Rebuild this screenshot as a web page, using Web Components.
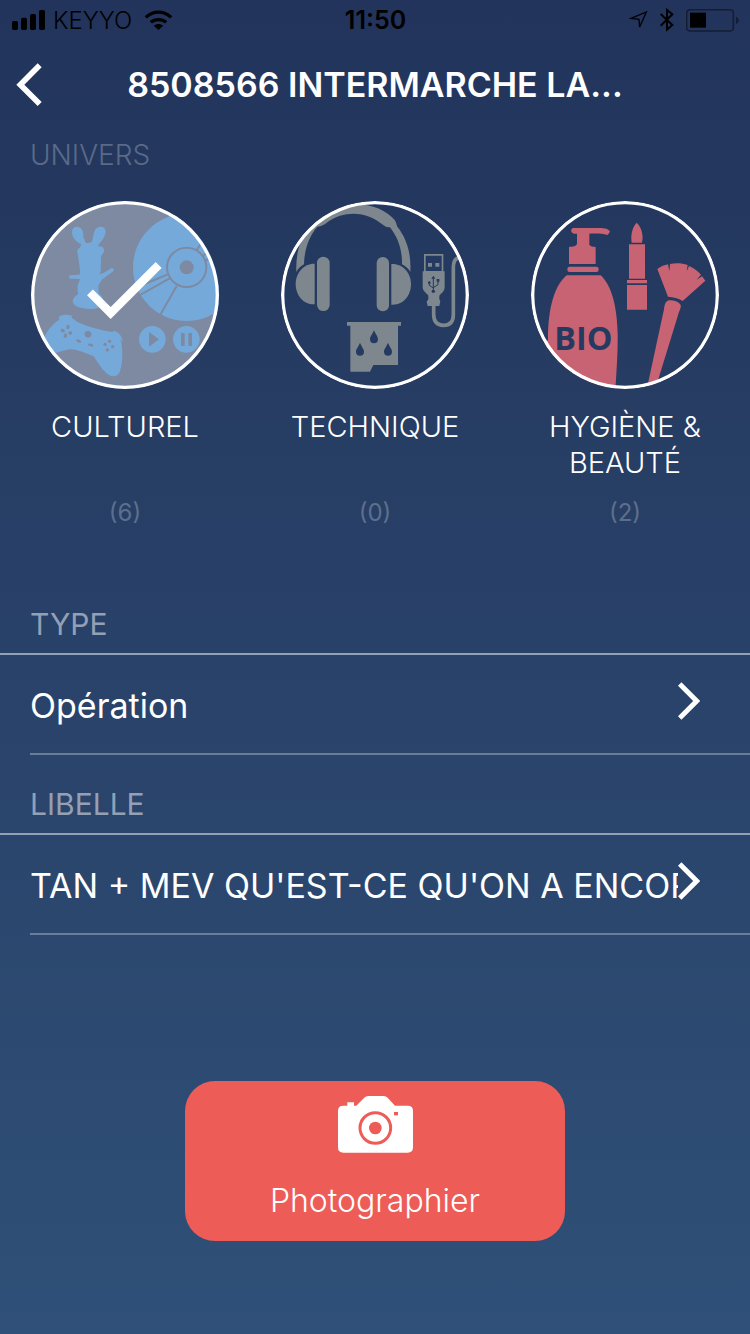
<!DOCTYPE html>
<html lang="fr">
<head>
<meta charset="utf-8">
<meta name="viewport" content="width=device-width, initial-scale=1">
<title>Photographier</title>
<style>
body {
    margin: 0;
    font-family: Inter, "Liberation Sans", sans-serif;
    color: #fff;
}
</style>
</head>
<body>
<photo-screen>
    <status-bar carrier="KEYYO" time="11:50"></status-bar>
    <nav-bar>8508566 INTERMARCHE LA...</nav-bar>
    <universe-picker heading="UNIVERS">
        <universe-tile count="6" selected>
            <svg slot="art" viewBox="33 33 564 564" aria-hidden="true">
                <g fill="#75a9da">
                    <circle cx="500" cy="232" r="161"/>
                    <path d="M184 163C166 155 155 140 156 126C157 113 165 109 174 111C188 113 191 128 190 142L198 160L215 157C219 146 219 134 224 122C229 110 245 107 253 114C262 125 254 145 235 164L236 171C246 166 253 174 252 184C250 193 244 194 243 200L242 245L238 253C252 250 263 242 273 235C279 231 284 238 280 244L245 269C243 277 235 281 235 290L236 310C247 318 253 329 249 341C242 358 208 359 190 355C166 351 156 341 159 329C161 321 168 318 175 312C170 298 173 279 181 268L168 266L150 266C146 263 147 257 151 256L177 254C182 252 180 246 180 240L173 190C171 181 173 175 180 173Z"/>
                    <path d="M70 448C76 430 92 407 117 389L117 380C128 373 144 373 156 377L155 385C162 387 165 391 172 396C205 411 242 421 278 426C283 419 300 430 304 442L302 451C309 472 309 519 300 544C295 559 280 563 267 555C248 543 234 519 221 499C200 491 174 479 153 478C136 479 121 486 109 488C90 484 76 470 70 448Z"/>
                    <circle cx="397" cy="448" r="40"/>
                    <circle cx="499" cy="448" r="40"/>
                </g>
                <path d="M280 424C292 425 305 440 307 455" fill="none" stroke="#75a9da" stroke-width="3"/>
                <g fill="none" stroke="#7d8aa2" stroke-width="6">
                    <circle cx="500" cy="232" r="59"/>
                    <path d="M442 254L352 291M449 265L360 315M470 288L421 374M530 181L552 146M549 198L575 175M558 212L590 192"/>
                </g>
                <g fill="#7d8aa2">
                    <circle cx="500" cy="232" r="21"/>
                    <path d="M387 426L417 448L387 470ZM483 429h11v39h-11ZM505 429h11v39h-11Z"/>
                    <circle cx="204" cy="433" r="10"/>
                    <ellipse cx="144" cy="411" rx="5" ry="7" transform="rotate(20 144 411)"/>
                    <ellipse cx="128" cy="422" rx="7" ry="5" transform="rotate(20 128 422)"/>
                    <ellipse cx="151" cy="429" rx="6" ry="5"/>
                    <ellipse cx="136" cy="437" rx="5" ry="7" transform="rotate(20 136 437)"/>
                    <ellipse cx="176" cy="453" rx="8" ry="4" transform="rotate(25 176 453)"/>
                    <ellipse cx="212" cy="465" rx="8" ry="4" transform="rotate(15 212 465)"/>
                    <circle cx="269" cy="454" r="5"/>
                    <circle cx="255" cy="463" r="5"/>
                    <circle cx="278" cy="470" r="5"/>
                    <circle cx="262" cy="480" r="5"/>
                </g>
            </svg>
            CULTUREL
        </universe-tile>
        <universe-tile count="0">
            <svg slot="art" viewBox="33 33 564 564" aria-hidden="true">
                <g fill="#7d878d">
                    <path d="M79 246C77 195 87 145 125 108C160 65 202 43 252 42C305 41 351 62 374 90C379 97 379 103 382 110C410 145 424 190 421 246C415 236 407 228 396 223C397 180 384 143 360 112C346 112 339 104 330 98C282 63 220 63 172 97C163 104 154 110 142 110C117 139 103 179 102 223C92 228 84 236 79 246Z"/>
                    <path d="M134 221V343C102 345 77 317 77 282C77 248 102 220 134 221Z"/>
                    <path d="M364 222V344C398 347 423 318 423 283C423 248 398 220 364 222Z"/>
                    <rect x="141" y="200" width="38" height="163" rx="19"/>
                    <rect x="320" y="201" width="37" height="163" rx="18"/>
                    <path d="M231 396H393V407H384V525H310L300 545H241V407H231Z"/>
                    <path d="M462 192H520V244H524V291C524 304 514 309 508 317V328L511 334L508 348H473L470 335L475 328V317C469 308 458 304 458 291V244H462Z"/>
                </g>
                <path d="M491 345V373C491 394 500 406 520 406C540 406 550 395 550 374V231C550 216 556 204 569 202" fill="none" stroke="#7d878d" stroke-width="11"/>
                <g fill="#243a61">
                    <path fill-rule="evenodd" d="M467 197H515V243H467ZM474 219V230H486V219ZM496 219V230H508V219Z"/>
                    <path d="M312 421C317 434 324 440 324 448A12 12 0 0 1 300 448C300 440 307 434 312 421ZM270 458C275 471 282 477 282 485A12 12 0 0 1 258 485C258 477 265 471 270 458ZM354 458C359 471 366 477 366 485A12 12 0 0 1 342 485C342 477 349 471 354 458Z"/>
                    <path d="M490 257L496 266H484Z"/>
                    <circle cx="490" cy="304" r="5"/>
                    <circle cx="478" cy="278" r="4"/>
                    <path d="M500 267h8v8h-8Z"/>
                </g>
                <path d="M490 263V304M478 278V286L490 294M504 272V284L490 293" fill="none" stroke="#243a61" stroke-width="3"/>
            </svg>
            TECHNIQUE
        </universe-tile>
        <universe-tile count="2">
            <svg slot="art" viewBox="33 33 564 564" aria-hidden="true">
                <g fill="#c86373">
                    <path d="M158 114H240C254 114 266 117 270 125L263 135C246 130 226 130 208 131V164C211 169 219 170 227 171V222H147V171C157 170 168 169 171 162V131H162C154 129 150 121 158 114Z"/>
                    <rect x="142" y="230" width="94" height="16" rx="7"/>
                    <path d="M140 256H242C276 288 291 350 293 430C294 480 290 537 286 600H120L33 500L84 450C84 350 105 285 140 256Z"/>
                    <path d="M350 98C362 108 372 133 366 158H335C331 133 339 108 350 98ZM327 163H375V266H327ZM321 270H381V280H321ZM321 285H381V359H321Z"/>
                    <path d="M412 237C422 229 434 225 444 223L448 244L450 222C468 218 486 219 503 225L500 244L507 228C523 235 534 244 543 254L530 269L546 259L556 272L488 333C476 324 460 321 444 320Z"/>
                    <path d="M448 331C462 331 476 335 482 345C484 354 478 361 474 376L408 590H382C397 522 414 440 432 358C434 342 437 333 448 331Z"/>
                </g>
                <text x="190" y="479" text-anchor="middle" font-family="'Open Sans', sans-serif" font-size="97" font-weight="700" fill="#243a61">BIO</text>
            </svg>
            HYGIÈNE &amp; BEAUTÉ
        </universe-tile>
    </universe-picker>
    <picker-row heading="TYPE">Opération</picker-row>
    <picker-row heading="LIBELLE">TAN + MEV QU'EST-CE QU'ON A ENCORE</picker-row>
    <photo-button>Photographier</photo-button>
</photo-screen>

<script>
function createTemplate(html) {
    const template = document.createElement('template');
    template.innerHTML = html;
    return template;
}

class BaseElement extends HTMLElement {
    constructor() {
        super();
        this.attachShadow({ mode: 'open' });
        this.shadowRoot.appendChild(this.constructor.template.content.cloneNode(true));
    }

    setText(selector, value) {
        this.shadowRoot.querySelector(selector).textContent = value;
    }
}

class PhotoScreen extends BaseElement {
    static template = createTemplate(`
<style>
:host {
    display: flex;
    flex-direction: column;
    min-height: 100vh;
    background: linear-gradient(#22345b, #294269 50%, #2f5078);
}
</style>
<slot></slot>
`);
}

class StatusBar extends BaseElement {
    static template = createTemplate(`
<style>
:host {
    display: grid;
    grid-template-columns: 1fr auto 1fr;
    align-items: center;
    height: 40px;
    padding: 0 11px 0 12px;
    color: #000;
    font-size: 24px;
    font-weight: 300;
}
div {
    display: flex;
    align-items: center;
    gap: 8px;
}
.icons {
    justify-content: flex-end;
    gap: 12px;
}
.carrier {
    padding-right: 4px;
}
.time {
    font-size: 25px;
    font-weight: 600;
}
svg {
    display: block;
}
</style>
<div>
    <svg width="33" height="20" viewBox="36 30 99 60">
        <rect x="36" y="63" width="18" height="27" rx="5"/>
        <rect x="63" y="53" width="18" height="37" rx="5"/>
        <rect x="90" y="42" width="18" height="48" rx="5"/>
        <rect x="117" y="30" width="18" height="60" rx="5"/>
    </svg>
    <span class="carrier"></span>
    <svg width="29" height="20" viewBox="428 30 86 60">
        <path d="M471 90L457 77C465 70 477 70 485 77Z"/>
        <path d="M448 67C461 56 481 56 494 67M433 52C455 31 487 31 509 52" fill="none" stroke="#000" stroke-width="10"/>
    </svg>
</div>
<span class="time"></span>
<div class="icons">
    <svg width="19" height="20" viewBox="762 33 57 60">
        <path d="M768 58L814 39L794 84L792 61Z" fill="none" stroke="#000" stroke-width="4"/>
    </svg>
    <svg width="14" height="24" viewBox="855 25 42 72">
        <path d="M857 43L892 76L876 90V31L892 44L857 78" fill="none" stroke="#000" stroke-width="6"/>
    </svg>
    <svg width="53" height="23" viewBox="933 28 159 69">
        <rect x="935" y="30" width="140" height="64" rx="10" fill="none" stroke="#141d33" stroke-width="5"/>
        <rect x="945" y="39" width="48" height="45"/>
        <path d="M1083 51C1094 55 1094 69 1083 73Z" fill="#141d33"/>
    </svg>
</div>
`);

    connectedCallback() {
        this.setText('.carrier', this.getAttribute('carrier'));
        this.setText('.time', this.getAttribute('time'));
    }
}

class NavBar extends BaseElement {
    static template = createTemplate(`
<style>
:host {
    display: grid;
    grid-template-columns: 64px 1fr 64px;
    align-items: center;
    height: 88px;
}
button {
    padding: 0 0 0 16px;
    border: 0;
    background: none;
    cursor: pointer;
}
svg {
    display: block;
}
h1 {
    margin: 0;
    overflow: hidden;
    font-size: 34px;
    font-weight: 600;
    text-align: center;
    white-space: nowrap;
}
</style>
<button aria-label="Retour">
    <svg width="26" height="43" viewBox="47 188 78 129">
        <path d="M118 195L60 253L118 311" fill="none" stroke="#fff" stroke-width="17"/>
    </svg>
</button>
<h1><slot></slot></h1>
`);
}

class UniversePicker extends BaseElement {
    static template = createTemplate(`
<style>
:host {
    display: block;
    padding-bottom: 74px;
}
h2 {
    margin: 0;
    padding: 9px 30px 28px;
    color: #5a6a87;
    font-size: 28px;
    font-weight: 300;
    line-height: 36px;
}
div {
    display: grid;
    grid-template-columns: repeat(3, 1fr);
}
</style>
<h2></h2>
<div><slot></slot></div>
`);

    connectedCallback() {
        this.setText('h2', this.getAttribute('heading'));
        this.addEventListener('universeSelected', e => {
            for (const tile of this.querySelectorAll('universe-tile')) {
                tile.toggleAttribute('selected', tile === e.target);
            }
        });
    }
}

class UniverseTile extends BaseElement {
    static get observedAttributes() {
        return ['selected'];
    }

    static template = createTemplate(`
<style>
:host {
    display: block;
}
button {
    display: flex;
    flex-direction: column;
    align-items: center;
    width: 100%;
    height: 100%;
    padding: 0 30px;
    border: 0;
    background: none;
    color: inherit;
    font: inherit;
    cursor: pointer;
}
.disc {
    display: grid;
    width: 188px;
    height: 188px;
    border-radius: 50%;
    overflow: hidden;
}
.disc > *, ::slotted(svg) {
    grid-area: 1 / 1;
    width: 188px;
    height: 188px;
}
:host([selected]) .disc {
    background: #7d8aa2;
}
.tick {
    display: none;
}
:host([selected]) .tick {
    display: block;
}
.label {
    flex: 1;
    min-height: 72px;
    padding-top: 20px;
    font-size: 29px;
    font-weight: 300;
    line-height: 36px;
}
.count {
    padding-top: 16px;
    color: #5d6f8d;
    font-size: 24px;
    font-weight: 400;
    line-height: 32px;
}
</style>
<button>
    <span class="disc">
        <slot name="art"></slot>
        <svg viewBox="33 33 564 564" aria-hidden="true" fill="none" stroke="#fff">
            <circle cx="315" cy="315" r="277" stroke-width="10"/>
            <path class="tick" d="M210 307L272 369L416 225" stroke-width="25"/>
        </svg>
    </span>
    <span class="label"><slot></slot></span>
    <span class="count"></span>
</button>
`);

    connectedCallback() {
        this.setText('.count', `(${this.getAttribute('count')})`);
        this.shadowRoot.querySelector('button').addEventListener('click', () => {
            this.dispatchEvent(new CustomEvent('universeSelected', { bubbles: true }));
        });
    }

    attributeChangedCallback() {
        this.shadowRoot.querySelector('button').setAttribute('aria-pressed', this.hasAttribute('selected'));
    }
}

class PickerRow extends BaseElement {
    static template = createTemplate(`
<style>
:host {
    display: block;
}
h2 {
    margin: 0;
    padding: 3px 30px 11px;
    border-bottom: 2px solid #94a0b4;
    color: #94a0b4;
    font-size: 30px;
    font-weight: 400;
    line-height: 36px;
}
.row {
    padding: 0 0 28px 30px;
}
button {
    display: flex;
    align-items: center;
    width: 100%;
    height: 100px;
    padding: 0 50px 0 0;
    border: 0;
    border-bottom: 2px solid #697e98;
    background: none;
    color: inherit;
    font: inherit;
    font-size: 34px;
    text-align: left;
    cursor: pointer;
}
.value {
    flex: 1;
    min-width: 0;
    padding-top: 4px;
    overflow: hidden;
    line-height: 44px;
    white-space: nowrap;
}
svg {
    display: block;
    flex: none;
    padding-bottom: 6px;
}
</style>
<h2 id="heading"></h2>
<div class="row">
    <button aria-describedby="heading">
        <span class="value"><slot></slot></span>
        <svg width="22" height="38" viewBox="909 65 66 114">
            <path d="M914 71L965 122L914 173" fill="none" stroke="#fff" stroke-width="15"/>
        </svg>
    </button>
</div>
`);

    connectedCallback() {
        this.setText('h2', this.getAttribute('heading'));
    }
}

class PhotoButton extends BaseElement {
    static template = createTemplate(`
<style>
:host {
    display: flex;
    justify-content: center;
    padding: 118px 30px 92px;
}
button {
    display: flex;
    flex-direction: column;
    align-items: center;
    gap: 28px;
    width: 380px;
    height: 160px;
    padding: 15px 0 0;
    border: 0;
    border-radius: 30px;
    background: #ed5c57;
    color: inherit;
    font: inherit;
    font-size: 32px;
    font-weight: 300;
    line-height: 40px;
    cursor: pointer;
}
svg {
    display: block;
}
</style>
<button>
    <svg width="75" height="57" viewBox="486 78 225 171" aria-hidden="true">
        <path d="M502 107H514V97H534V107H541L564 84Q570 78 577 78H623Q630 78 635 83L657 107H695Q711 107 711 123V232Q711 248 695 248H502Q486 248 486 232V123Q486 107 502 107Z" fill="#fff"/>
        <circle cx="598" cy="174" r="46" fill="none" stroke="#ed5c57" stroke-width="9"/>
        <circle cx="598" cy="174" r="19" fill="#ed5c57"/>
        <rect x="654" y="126" width="12" height="10" fill="#ed5c57"/>
    </svg>
    <span><slot></slot></span>
</button>
`);
}

customElements.define('photo-screen', PhotoScreen);
customElements.define('status-bar', StatusBar);
customElements.define('nav-bar', NavBar);
customElements.define('universe-picker', UniversePicker);
customElements.define('universe-tile', UniverseTile);
customElements.define('picker-row', PickerRow);
customElements.define('photo-button', PhotoButton);
</script>
</body>
</html>
